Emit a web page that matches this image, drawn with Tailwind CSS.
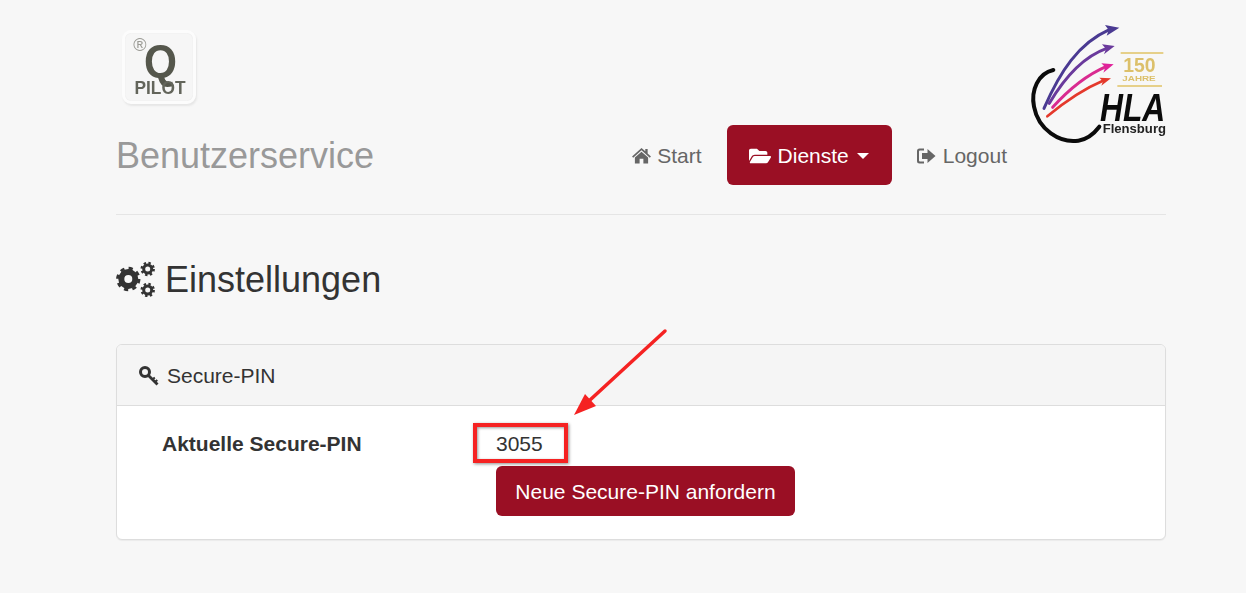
<!DOCTYPE html>
<html lang="de">
<head>
    <meta charset="UTF-8">
    <meta name="viewport" content="width=device-width, initial-scale=1.0">
    <title>Benutzerservice</title>
    <script src="https://cdn.jsdelivr.net/npm/@tailwindcss/browser@4"></script>
</head>
<body class="relative bg-[#f7f7f7] h-[593px] overflow-hidden font-['Liberation_Sans',Arial,sans-serif] text-[#333]">
    <div class="w-[1050px] ml-[116px]">

        <!-- Kopfbereich -->
        <header class="flex border-b border-[#e5e5e5] h-[215px]">
            <div class="w-[916px] shrink-0">
                <div class="ml-[6px] mt-[30px] mb-[21px] w-[74px] h-[74px] rounded-[9px] bg-[#f6f6f6] border-[3px] border-[#fcfcfc] shadow-[1px_2px_2px_#e6e6e6,inset_0_0_1px_#ddd]">
                    <svg viewBox="0 0 68 68" class="w-[68px] h-[68px] blur-[0.3px]">
                        <text x="15" y="18" font-size="18" fill="#9a9a94" text-anchor="middle" font-family="Liberation Sans">®</text>
                        <text x="35.5" y="44" font-size="46" font-weight="bold" fill="#55574c" text-anchor="middle" font-family="Liberation Sans" textLength="33" lengthAdjust="spacingAndGlyphs">Q</text>
                        <text x="35" y="61" font-size="18" font-weight="bold" fill="#63655b" text-anchor="middle" font-family="Liberation Sans" textLength="51" lengthAdjust="spacingAndGlyphs">PILOT</text>
                    </svg>
                </div>
                <div class="flex items-center justify-between h-[60px]">
                    <h3 class="text-[36px] text-[#999] leading-none mt-[2px]">Benutzerservice</h3>
                    <nav class="flex text-[21px] text-[#666]">
                        <a class="flex items-center gap-[6px] h-[60px] px-[25px] pt-[1px]">
                            <svg viewBox="0 0 20 18" class="w-[19px] h-[17px] fill-[#666]"><path d="M10 1 L14 4.6 V2 H16.5 V6.8 L20 10 L18.8 11.3 L10 3.4 L1.2 11.3 L0 10 Z"/><path d="M10 5 L17 11 V17.5 H12 V12.5 H8 V17.5 H3 V11 Z"/></svg>
                            Start
                        </a>
                        <a class="flex items-center h-[60px] pl-[22px] pr-[23px] pt-[1px] rounded-[6px] bg-[#9a0f24] text-white">
                            <svg viewBox="0 0 576 512" class="w-[22px] h-[20px] fill-white mr-[7px]"><path d="M572.694 292.093L500.27 416.248A63.997 63.997 0 0 1 444.989 448H45.025c-18.523 0-30.064-20.093-20.731-36.093l72.424-124.155A64 64 0 0 1 152 256h399.964c18.523 0 30.064 20.093 20.73 36.093zM152 224h328v-48c0-26.51-21.49-48-48-48H272l-64-64H48C21.49 64 0 85.49 0 112v278.046l69.077-118.418C86.214 242.25 117.989 224 152 224z"/></svg>
                            Dienste
                            <span class="ml-[8px] w-0 h-0 border-x-[6px] border-x-transparent border-t-[6px] border-t-white"></span>
                        </a>
                        <a class="flex items-center gap-[7px] h-[60px] px-[25px] pt-[1px]">
                            <svg viewBox="0 0 19 16" class="w-[19px] h-[16px] fill-[#666]"><path d="M0 3 Q0 0.5 2.5 0.5 H7 V2.5 H3 Q2 2.5 2 3.5 V12.5 Q2 13.5 3 13.5 H7 V15.5 H2.5 Q0 15.5 0 13 Z"/><path d="M5 5 H10.5 V1 L18.5 8 L10.5 15 V11 H5 Z"/></svg>
                            Logout
                        </a>
                    </nav>
                </div>
            </div>
            <svg viewBox="60 15 408 369" class="w-[136px] h-[123px] mt-[20px] -ml-[2px] shrink-0 blur-[0.4px] overflow-visible">
                <g fill="none" stroke-linecap="round">
                    <path d="M130 165 C 85 175, 62 225, 72 275 C 85 345, 150 385, 205 377 C 235 372, 255 352, 268 335" stroke="#0b0b0b" stroke-width="12"/>
                    <path d="M102 280 C 150 170, 205 85, 298 44" stroke="#4a3a92" stroke-width="9"/>
                    <path d="M118 265 C 165 185, 220 125, 290 100" stroke="#6a3a9c" stroke-width="9"/>
                    <path d="M128 277 C 175 225, 230 180, 288 155" stroke="#d92b90" stroke-width="9"/>
                    <path d="M112 304 C 165 260, 225 220, 282 196" stroke="#e4392c" stroke-width="8"/>
                </g>
                <polygon points="328,38 285,30 296,45 290,62" fill="#4a3a92"/>
                <polygon points="314,93 276,88 288,102 282,118" fill="#6a3a9c"/>
                <polygon points="311,148 274,145 286,157 280,173" fill="#e0229a"/>
                <polygon points="303,190 268,188 279,199 274,212" fill="#e4392c"/>
                <path d="M332 114 H460 M322 213 H456" stroke="#e6d08a" stroke-width="6"/>
                <text x="388" y="172" font-size="60" font-weight="bold" fill="#dcc06a" text-anchor="middle" font-family="Liberation Sans" textLength="97" lengthAdjust="spacingAndGlyphs">150</text>
                <text x="387" y="198" font-size="24" font-weight="bold" fill="#dcc06a" text-anchor="middle" font-family="Liberation Sans" textLength="100" lengthAdjust="spacingAndGlyphs">JAHRE</text>
                <text x="368" y="319" font-size="116" font-style="italic" font-weight="bold" fill="#0b0b0b" text-anchor="middle" font-family="Liberation Sans" textLength="196" lengthAdjust="spacingAndGlyphs">HLA</text>
                <text x="373" y="354" font-size="38" font-weight="bold" fill="#222" text-anchor="middle" font-family="Liberation Sans" textLength="190" lengthAdjust="spacingAndGlyphs">Flensburg</text>
            </svg>
        </header>

        <!-- Seitentitel -->
        <h1 class="flex items-center gap-[9px] h-[129px] text-[36px]">
            <svg viewBox="0 0 39 36" class="w-[39px] h-[36px] mt-[-2px]" fill="none" stroke="#333">
                <circle cx="12.3" cy="18" r="7" stroke-width="6"/>
                <circle cx="12.3" cy="18" r="10.75" stroke-width="2.8" stroke-dasharray="4.2 4.24"/>
                <circle cx="31.7" cy="8" r="4" stroke-width="3"/>
                <circle cx="31.7" cy="8" r="6" stroke-width="2.4" stroke-dasharray="2.35 2.36"/>
                <circle cx="31.7" cy="29" r="4" stroke-width="3"/>
                <circle cx="31.7" cy="29" r="6" stroke-width="2.4" stroke-dasharray="2.35 2.36"/>
            </svg>
            <span class="ml-[1px]">Einstellungen</span>
        </h1>

        <!-- Secure-PIN Panel -->
        <section class="h-[196px] bg-white border border-[#ddd] rounded-[6px] shadow-[0_1px_1px_rgba(0,0,0,0.05)] overflow-hidden">
            <div class="flex items-center gap-[8px] h-[61px] pl-[22px] pt-[1px] bg-[#f5f5f5] border-b border-[#ddd] text-[21px]">
                <svg viewBox="0 0 20 20" class="w-[20px] h-[20px]" fill="none" stroke="#333">
                    <circle cx="6" cy="6" r="4.5" stroke-width="3"/>
                    <path d="M9.5 9.5 L18.5 18.5" stroke-width="2.8"/>
                    <path d="M13.5 13.5 L15.8 11.5 M16 16 L18.3 14" stroke-width="2"/>
                </svg>
                Secure-PIN
            </div>
            <div class="pt-[25px]">
                <div class="flex items-center h-[26px] text-[21px]">
                    <span class="w-[379px] pl-[45px] font-bold">Aktuelle Secure-PIN</span>
                    <span>3055</span>
                </div>
                <button class="block ml-[379px] mt-[9px] w-[299px] h-[50px] pt-[1px] rounded-[6px] bg-[#9a0f24] text-white text-[21px]">Neue Secure-PIN anfordern</button>
            </div>
        </section>
    </div>

    <!-- Markierung über dem Screenshot -->
    <div class="absolute left-[473px] top-[423px] w-[95px] h-[40px] border-[4px] border-[#f52222] shadow-[1px_1px_3px_rgba(0,0,0,0.45),inset_1px_1px_3px_rgba(0,0,0,0.4)]"></div>
    <svg class="absolute left-[560px] top-[320px]" width="115" height="105" viewBox="560 320 115 105">
        <path d="M665 331 L590 400" stroke="#f52222" stroke-width="3.5" stroke-linecap="round"/>
        <polygon points="574,415 585,394 596,406" fill="#f52222"/>
    </svg>
</body>
</html>
